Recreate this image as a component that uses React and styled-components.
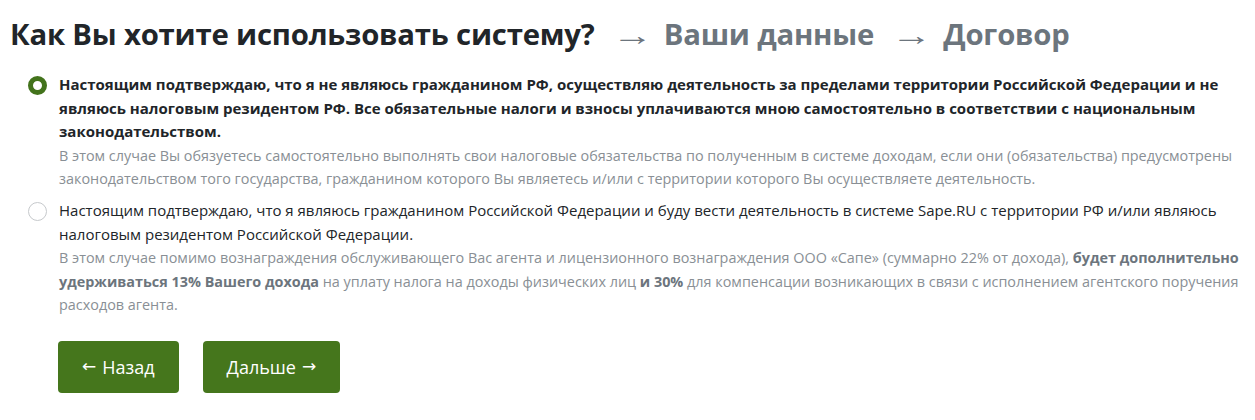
import React, { useState } from "react";
import styled, { createGlobalStyle } from "styled-components";

const GlobalStyle = createGlobalStyle`
  body {
    margin: 0;
    background: #fff;
    font-family: "Open Sans", "Liberation Sans", sans-serif;
    color: #212529;
  }
`;

const Page = styled.div`
  padding: 14px 10px 0 10px;
`;

const Steps = styled.h1`
  margin: 0 0 19px 0;
  font-size: 29.3px;
  font-weight: 700;
  line-height: 40px;
  display: flex;
  gap: 16px;
  letter-spacing: -0.2px;
`;

const Step = styled.span`
  color: ${(p) => (p.$active ? "#212529" : "#6c757d")};
  font-weight: ${(p) => (p.$arrow ? 400 : 700)};
  padding: ${(p) => (p.$arrow ? "0 2px 0 6px" : "0")};
  transform: ${(p) => (p.$arrow ? "scaleX(1.4)" : "none")};
`;

const Options = styled.div`
  display: flex;
  flex-direction: column;
  gap: 9px;
  padding-left: 18px;
`;

const Option = styled.label`
  display: flex;
  gap: 12px;
  cursor: pointer;
`;

const Radio = styled.span`
  flex: 0 0 auto;
  box-sizing: border-box;
  width: 19px;
  height: 19px;
  margin-top: 3px;
  border-radius: 50%;
  background: #fff;
  border: ${(p) => (p.$checked ? "5px solid #43731c" : "1px solid #c6c9cc")};
`;

const Body = styled.div`
  flex: 1;
`;

const Lead = styled.div`
  font-size: 15px;
  line-height: 23.5px;
  font-weight: ${(p) => (p.$bold ? 700 : 400)};
  color: #212529;
`;

const Note = styled.div`
  font-size: 14.4px;
  line-height: 23.4px;
  color: #898f95;

  b {
    color: #6c757d;
    font-weight: 700;
  }
`;

const Actions = styled.div`
  display: flex;
  gap: 24px;
  padding: 24px 0 0 48px;
`;

const Button = styled.button`
  display: flex;
  align-items: center;
  gap: 6px;
  height: 52px;
  padding: 0 24px;
  border: none;
  border-radius: 4px;
  background: #45761c;
  color: #fff;
  font-family: "Open Sans", "Liberation Sans", sans-serif;
  font-size: 18px;
  cursor: pointer;
`;

const Arrow = styled.span`
  font-family: "DejaVu Sans", sans-serif;
  font-size: 17px;
  line-height: 1;
`;

export default function App() {
  const [choice, setChoice] = useState("nonresident");

  return (
    <>
      <GlobalStyle />
      <Page>
        <Steps>
          <Step $active>Как Вы хотите использовать систему?</Step>
          <Step $arrow>→</Step>
          <Step>Ваши данные</Step>
          <Step $arrow>→</Step>
          <Step>Договор</Step>
        </Steps>

        <Options>
          <Option onClick={() => setChoice("nonresident")}>
            <Radio $checked={choice === "nonresident"} />
            <Body>
              <Lead $bold>
                Настоящим подтверждаю, что я не являюсь гражданином РФ, осуществляю деятельность за пределами территории Российской Федерации и не являюсь налоговым резидентом РФ. Все обязательные налоги и взносы уплачиваются мною самостоятельно в соответствии с национальным законодательством.
              </Lead>
              <Note>
                В этом случае Вы обязуетесь самостоятельно выполнять свои налоговые обязательства по полученным в системе доходам, если они (обязательства) предусмотрены законодательством того государства, гражданином которого Вы являетесь и/или с территории которого Вы осуществляете деятельность.
              </Note>
            </Body>
          </Option>

          <Option onClick={() => setChoice("resident")}>
            <Radio $checked={choice === "resident"} />
            <Body>
              <Lead>
                Настоящим подтверждаю, что я являюсь гражданином Российской Федерации и буду вести деятельность в системе Sape.RU с территории РФ и/или являюсь налоговым резидентом Российской Федерации.
              </Lead>
              <Note>
                В этом случае помимо вознаграждения обслуживающего Вас агента и лицензионного вознаграждения ООО «Сапе» (суммарно 22% от дохода), <b>будет дополнительно</b> <b>удерживаться 13% Вашего дохода</b> на уплату налога на доходы физических лиц <b>и 30%</b> для компенсации возникающих в связи с исполнением агентского поручения расходов агента.
              </Note>
            </Body>
          </Option>
        </Options>

        <Actions>
          <Button>
            <Arrow>←</Arrow>
            Назад
          </Button>
          <Button>
            Дальше
            <Arrow>→</Arrow>
          </Button>
        </Actions>
      </Page>
    </>
  );
}
